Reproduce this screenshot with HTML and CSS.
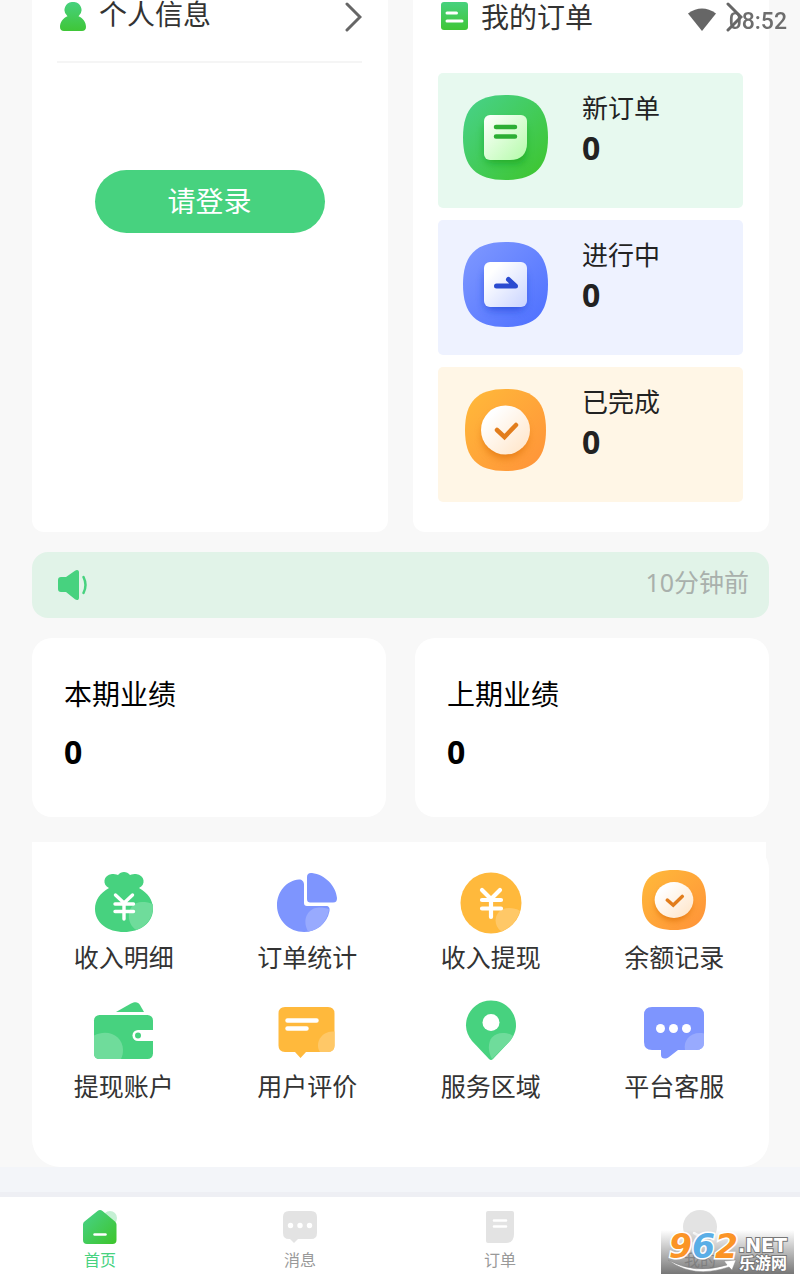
FILE: index.html
```
<!DOCTYPE html>
<html lang="zh-CN">
<head>
<meta charset="UTF-8">
<meta name="viewport" content="width=device-width, initial-scale=1.0">
<title>首页</title>
<link rel="stylesheet" href="styles.css">
</head>
<body>

<!-- shared gradients and shapes -->
<svg class="defs" width="0" height="0" aria-hidden="true">
  <defs>
    <linearGradient id="green" x1="0" y1="0" x2="1" y2="1"><stop offset="0" stop-color="#48d28c"/><stop offset="1" stop-color="#3dc52a"/></linearGradient>
    <linearGradient id="green-v" x1="0" y1="0" x2="0" y2="1"><stop offset="0" stop-color="#47d17e"/><stop offset="1" stop-color="#3fc637"/></linearGradient>
    <linearGradient id="blue" x1="0" y1="0" x2="1" y2="1"><stop offset="0" stop-color="#8099ff"/><stop offset="1" stop-color="#4c6fff"/></linearGradient>
    <linearGradient id="orange" x1="0" y1="0" x2="1" y2="1"><stop offset="0" stop-color="#ffba3a"/><stop offset="1" stop-color="#ff9239"/></linearGradient>
    <linearGradient id="paper-green" x1="0" y1="0" x2="1" y2="1"><stop offset="0" stop-color="#fff"/><stop offset="1" stop-color="#b4fba9"/></linearGradient>
    <linearGradient id="paper-blue" x1="0" y1="0" x2="1" y2="1"><stop offset="0.2" stop-color="#fff"/><stop offset="1" stop-color="#c9d4ff"/></linearGradient>
    <linearGradient id="paper-orange" x1="0" y1="0" x2="1" y2="1"><stop offset="0.2" stop-color="#fff"/><stop offset="1" stop-color="#ffe3c4"/></linearGradient>
    <filter id="blur" x="-50%" y="-50%" width="200%" height="200%"><feGaussianBlur stdDeviation="4"/></filter>
    <symbol id="done" viewBox="0 0 81 82" preserveAspectRatio="none">
      <path fill="url(#orange)" d="M40.500 0C69 0 81 13 81 41S69 82 40.500 82 0 69 0 41 12 0 40.500 0Z"/>
      <circle cx="40" cy="47" r="22" fill="#d96a00" opacity=".7" filter="url(#blur)"/>
      <circle cx="40.500" cy="41" r="24.500" fill="url(#paper-orange)"/>
      <path d="M32 41l7.500 7L51 36" fill="none" stroke="#e27d1c" stroke-width="4.500" stroke-linecap="round"/>
    </symbol>
  </defs>
</svg>

<div class="status-bar">
  <svg width="30" height="24" viewBox="0 0 30 24" aria-hidden="true"><path d="M1 5.500Q15-4.500 29 5.500L15 23Z" fill="#666"/></svg>
  <span class="clock">08:52</span>
</div>

<main class="content">
  <div class="cards">
    <section class="card card-user">
      <a href="#user" class="card-head">
        <svg class="head-icon" width="26" height="30" viewBox="0 0 26 30" aria-hidden="true">
          <path fill="url(#green-v)" d="M13 0a8 8 0 0 1 5.500 14.200c4.500 2 7.500 5.800 7.500 10.800 0 2.800-1.500 4-4 4H4c-2.500 0-4-1.200-4-4 0-5 3-8.800 7.500-10.800A8 8 0 0 1 13 0Z"/>
        </svg>
        <span class="card-title">个人信息</span>
        <svg class="arrow" width="18" height="30" viewBox="0 0 18 30" aria-hidden="true"><path d="M3 2l13 13L3 28" /></svg>
      </a>
      <button type="button" class="login-btn">请登录</button>
    </section>

    <section class="card card-orders">
      <a href="#orders" class="card-head">
        <svg class="head-icon" width="27" height="28" viewBox="0 0 27 28" aria-hidden="true">
          <rect width="27" height="28" rx="3" fill="url(#green-v)"/>
          <path d="M6 11h9.500M6 19h15" stroke="#fff" stroke-width="3" stroke-linecap="round"/>
        </svg>
        <span class="card-title">我的订单</span>
        <svg class="arrow" width="18" height="30" viewBox="0 0 18 30" aria-hidden="true"><path d="M3 2l13 13L3 28" /></svg>
      </a>
      <div class="orders">
        <a href="#new" class="order order-new">
          <svg width="85" height="85" viewBox="0 0 85 85" aria-hidden="true">
            <path fill="url(#green)" d="M42.500 0C72 0 85 13 85 42.500S72 85 42.500 85 0 72 0 42.500 13 0 42.500 0Z"/>
            <rect x="22" y="28" width="40" height="40" rx="8" fill="#089a18" opacity=".65" filter="url(#blur)"/>
            <path fill="url(#paper-green)" d="M27 20h31a6 6 0 0 1 6 6v22c0 11-6 17-17 17H27a6 6 0 0 1-6-6V26a6 6 0 0 1 6-6Z"/>
            <path d="M33 32h19M33 41.500h19" stroke="#2cae34" stroke-width="4.500" stroke-linecap="round"/>
          </svg>
          <span class="order-text"><span class="order-name">新订单</span><b class="order-num">0</b></span>
        </a>
        <a href="#doing" class="order order-doing">
          <svg width="85" height="85" viewBox="0 0 85 85" aria-hidden="true">
            <path fill="url(#blue)" d="M42.500 0C72 0 85 13 85 42.500S72 85 42.500 85 0 72 0 42.500 13 0 42.500 0Z"/>
            <rect x="22" y="28" width="40" height="40" rx="8" fill="#173bd0" opacity=".65" filter="url(#blur)"/>
            <rect x="21" y="20" width="43" height="45" rx="6" fill="url(#paper-blue)"/>
            <path d="M33.500 44H52.500L45.500 37.500" fill="none" stroke="#2a4bd0" stroke-width="5" stroke-linecap="round" stroke-linejoin="round"/>
          </svg>
          <span class="order-text"><span class="order-name">进行中</span><b class="order-num">0</b></span>
        </a>
        <a href="#done-list" class="order order-done">
          <svg width="85" height="85" viewBox="-2 0 85 85" aria-hidden="true"><use href="#done" width="81" height="82"/></svg>
          <span class="order-text"><span class="order-name">已完成</span><b class="order-num">0</b></span>
        </a>
      </div>
    </section>
  </div>

  <div class="notice">
    <svg width="30" height="30" viewBox="0 0 30 30" aria-hidden="true">
      <path fill="#47d27f" d="M3 7h5L17 .8c2-1.500 4-.8 4 1.500v25.400c0 2.300-2 3-4 1.500L8 22H3a3 3 0 0 1-3-3v-9a3 3 0 0 1 3-3Z"/>
      <path d="M25.500 7q4 8 0 16" fill="none" stroke="#47d27f" stroke-width="2.500" stroke-linecap="round"/>
    </svg>
    <span class="notice-time">10分钟前</span>
  </div>

  <div class="stats">
    <div class="stat"><div class="stat-name">本期业绩</div><b class="stat-num">0</b></div>
    <div class="stat"><div class="stat-name">上期业绩</div><b class="stat-num">0</b></div>
  </div>

  <div class="menu">
    <div class="menu-grid">
      <a href="#income" class="menu-item">
        <svg width="64" height="64" viewBox="0 0 64 64" aria-hidden="true">
          <path fill="#47d27f" d="M17 18c-7-3-6-13 3-14 2 0 4 0 6 1 3-4 9-4 12 0 2-1 4-1 6-1 9 1 10 11 3 14 9 5 14 12 14 21 0 14-13 23-29 23S3 53 3 39c0-9 5-16 14-21Z"/>
          <path fill="#6fdc9b" d="M61 34.500c.500 13-6 21.500-16.500 25.500C33 54 34 32 50 32c4 0 8 .5 11 2.500Z"/>
          <path d="M23.500 25L32 33l8.500-8M23 34h18.500M23 41.500h18.500M32 33v16" fill="none" stroke="#fff" stroke-width="3.400" stroke-linecap="round"/>
        </svg>
        <span>收入明细</span>
      </a>
      <a href="#stats" class="menu-item">
        <svg width="64" height="64" viewBox="0 0 64 64" aria-hidden="true">
          <path fill="#7e95fe" d="M29 14.500V33c0 2 1 3 3 3h19c3 0 4 2 3.500 5C52 54 41 62 29 62 14 62 2 50 2 35.500 2 21 12 10.500 24 9.500c3 0 5 2 5 5Z"/>
          <path fill="#7e95fe" d="M32 7c0-3 2-4.500 5-4 13 1.500 24 13 25 25 0 3-1 4.500-4 4.500H36c-3 0-4-1-4-4Z"/>
          <path fill="#98aafe" d="M33 61.500c-7-13 1-24 11-24 4 0 8 .5 10 2C52 52 44 60 33 61.500Z"/>
        </svg>
        <span>订单统计</span>
      </a>
      <a href="#withdraw" class="menu-item">
        <svg width="64" height="64" viewBox="0 0 64 64" aria-hidden="true">
          <circle cx="32" cy="33" r="30.500" fill="#ffb93c"/>
          <path fill="#ffc867" d="M42.500 61.500C32 54 36 38 50 38c4 0 8 .8 11 3-3 10-10 17-18.500 20.500Z"/>
          <path d="M23 20l9 9 9-9M23 30h19M23 38.500h19M32 29v18" fill="none" stroke="#fff" stroke-width="4.200" stroke-linecap="round"/>
        </svg>
        <span>收入提现</span>
      </a>
      <a href="#balance" class="menu-item">
        <svg width="64" height="64" viewBox="0 1 64 64" aria-hidden="true"><use href="#done" x="0" y="1" width="64" height="60"/></svg>
        <span>余额记录</span>
      </a>
      <a href="#account" class="menu-item">
        <svg width="64" height="64" viewBox="0 0 64 64" aria-hidden="true">
          <path fill="#47d27f" d="M24 13L39 4.500c4-2 7-2 9 1.500l4 7Z"/>
          <rect x="2" y="16" width="59" height="44" rx="5.500" fill="#47d27f"/>
          <path fill="#6fdc9b" d="M2 36.500C16 29 31 37 31 51c0 3-.5 6-2 9H7.500Q2 60 2 54.500Z"/>
          <path fill="#fff" d="M61 31H46a5.500 5.500 0 0 0 0 11h15Z"/>
          <circle cx="46" cy="36.500" r="3" fill="#47d27f"/>
        </svg>
        <span>提现账户</span>
      </a>
      <a href="#reviews" class="menu-item">
        <svg width="64" height="64" viewBox="0 0 64 64" aria-hidden="true">
          <path fill="#ffb93c" d="M10 8h43q6.500 0 6.500 6.500v32q0 6.500-6.500 6.500H31l-5.500 6L20 53h-10q-6.500 0-6.500-6.500v-32Q3.500 8 10 8Z"/>
          <path fill="#ffc867" d="M59.500 32.500v14q0 6.500-6.500 6.500h-8c-6-9 2-22 14.500-20.500Z"/>
          <path d="M12.500 21.500h29M12.500 29.500h19" stroke="#fff" stroke-width="4.500" stroke-linecap="round"/>
        </svg>
        <span>用户评价</span>
      </a>
      <a href="#area" class="menu-item">
        <svg width="64" height="64" viewBox="0 0 64 64" aria-hidden="true">
          <path fill="#47d27f" d="M32 1.500c14 0 25 11 25 25 0 6-2.500 11-6 15.500L34 60q-2 2-4 0L13 42c-3.500-4.500-6-9.500-6-15.500 0-14 11-25 25-25Z"/>
          <path fill="#6fdc9b" d="M54 37c-1 2-2 4-3.500 5.500L33 60C27 49 29 34 44 34c4 0 8 1 10 3Z"/>
          <circle cx="32" cy="23.500" r="8.500" fill="#fff"/>
        </svg>
        <span>服务区域</span>
      </a>
      <a href="#service" class="menu-item">
        <svg width="64" height="64" viewBox="0 0 64 64" aria-hidden="true">
          <path fill="#7e95fe" d="M10 8h44q8 0 8 8v27q0 8-8 8H36l-9 7c-4 3-8 1.500-8-2v-5h-9q-8 0-8-8V16q0-8 8-8Z"/>
          <path fill="#98aafe" d="M62 34.500V43q0 8-8 8H43c-2-10 6-19 19-16.500Z"/>
          <circle cx="18.500" cy="29.500" r="4.500" fill="#fff"/><circle cx="31.500" cy="29.500" r="4.500" fill="#fff"/><circle cx="44.500" cy="29.500" r="4.500" fill="#fff"/>
        </svg>
        <span>平台客服</span>
      </a>
    </div>
  </div>
</main>

<div class="strip"></div>

<nav class="tabbar">
  <a href="#home" class="tab active">
    <svg width="36" height="36" viewBox="0 0 36 36" aria-hidden="true">
      <circle cx="28" cy="9" r="7" fill="#c5f0d4"/>
      <path fill="url(#green)" d="M15.500 2q2.500-2 5 0l12.500 10.500q1.500 1.500 1.500 3V31q0 4-4 4H5q-4 0-4-4V15.500q0-2 1.500-3Z"/>
      <path d="M12.500 25.500h11" stroke="#fff" stroke-width="2.500" stroke-linecap="round"/>
    </svg>
    <span>首页</span>
  </a>
  <a href="#message" class="tab">
    <svg width="36" height="36" viewBox="0 0 36 36" aria-hidden="true">
      <path fill="#e3e3e3" d="M7 2h22q6 0 6 6v16q0 6-6 6H16l-4 4-4-4H7q-6 0-6-6V8q0-6 6-6Z"/>
      <circle cx="8.500" cy="16.500" r="2.700" fill="#fff"/><circle cx="18" cy="16.500" r="2.700" fill="#fff"/><circle cx="27.500" cy="16.500" r="2.700" fill="#fff"/>
    </svg>
    <span>消息</span>
  </a>
  <a href="#order" class="tab">
    <svg width="36" height="36" viewBox="0 0 36 36" aria-hidden="true">
      <path fill="#e3e3e3" d="M6 2h24q2 0 2 2v21q0 9-8 9H6q-2 0-2-2V4q0-2 2-2Z"/>
      <path d="M12 11.500h12M12 17.500h12" stroke="#fff" stroke-width="2.600" stroke-linecap="round"/>
    </svg>
    <span>订单</span>
  </a>
  <a href="#mine" class="tab">
    <svg width="36" height="36" viewBox="0 0 36 36" aria-hidden="true">
      <circle cx="18" cy="18" r="17" fill="#e3e3e3"/>
      <path d="M12 24q6 5 12 0" fill="none" stroke="#fff" stroke-width="2.500" stroke-linecap="round"/>
    </svg>
    <span>我的</span>
  </a>

  <svg class="site-mark" width="133" height="44" viewBox="0 0 133 44" role="img" aria-label="962.NET 乐游网">
    <defs>
      <linearGradient id="mark-bg" x1="0" y1="0" x2="0" y2="1"><stop offset="0" stop-color="#777" stop-opacity="0"/><stop offset="1" stop-color="#777"/></linearGradient>
    </defs>
    <rect width="133" height="44" fill="url(#mark-bg)"/>
    <path d="M7 30Q34 45 66 35l-3-4 12-1-4 10-3-3Q32 49 7 30Z" fill="#fff" stroke="#888" stroke-width=".5"/>
    <text class="mark-net" x="77" y="22">.NET</text>
    <text class="mark-cn" x="78" y="39">乐游网</text>
    <text class="mark-num" x="8" y="28"><tspan fill="#fb9426">9</tspan><tspan fill="#5aaee6">6</tspan><tspan fill="#fb9426">2</tspan></text>
  </svg>
</nav>

</body>
</html>
```
FILE: styles.css
```
* {
  box-sizing: border-box;
}

body {
  margin: 0;
  min-height: 100vh;
  display: flex;
  flex-direction: column;
  position: relative;
  background-color: #f8f8f8;
  color: #333;
  font-family: "Noto Sans", "Noto Sans CJK SC", sans-serif;
}

a {
  color: inherit;
  text-decoration: none;
}

svg {
  display: block;
  flex-shrink: 0;
}

.defs {
  position: absolute;
}

/* system status, lies over the page */
.status-bar {
  position: absolute;
  top: 8px;
  right: 13px;
  display: flex;
  gap: 12px;
  z-index: 2;
}

.clock {
  font-family: Roboto, sans-serif;
  font-weight: 500;
  font-size: 23px;
  line-height: 28px;
  color: #666;
  opacity: 0.95;
}

.content {
  padding: 0 31px 0 32px;
}

.cards {
  display: grid;
  grid-template-columns: 1fr 1fr;
  gap: 25px;
}

.card {
  background-color: #fff;
  border-radius: 0 0 12px 12px;
  padding: 0 26px 30px 25px;
}

.card-head {
  display: flex;
  align-items: flex-start;
  padding-top: 2px;
}

.card-title {
  flex: 1;
  margin-left: 13px;
  font-size: 28px;
  line-height: 30px;
}

.arrow {
  fill: none;
  stroke: #666;
  stroke-width: 3px;
  stroke-linecap: round;
}

.card-user .card-head {
  height: 63px;
  padding-left: 3px;
  border-bottom: 2px solid #f5f5f5;
}

.card-user .card-title {
  line-height: 24px;
}

.card-orders .card-head {
  height: 73px;
  padding-left: 3px;
}

.login-btn {
  display: block;
  width: 230px;
  max-width: 100%;
  height: 63px;
  margin: 107px auto 0;
  padding: 0 0 4px;
  border: none;
  border-radius: 32px;
  background-color: #47d27f;
  color: #fff;
  font-family: inherit;
  font-size: 28px;
  cursor: pointer;
}

.orders {
  display: flex;
  flex-direction: column;
  gap: 12px;
}

.order {
  display: flex;
  gap: 34px;
  min-height: 135px;
  padding: 22px 25px;
  border-radius: 5px;
  color: #222;
}

.order-new {
  background-color: #e7f9ef;
}

.order-doing {
  background-color: #eef2ff;
}

.order-done {
  background-color: #fff6e6;
}

.order-text {
  display: flex;
  flex-direction: column;
}

.order-name {
  font-size: 26px;
  line-height: 26px;
}

.order-num {
  font-size: 32px;
  line-height: 54px;
}

.notice {
  display: flex;
  justify-content: space-between;
  align-items: center;
  height: 66px;
  margin-top: 20px;
  padding: 0 20px 0 26px;
  border-radius: 16px;
  background-color: #e1f3e8;
}

.notice-time {
  font-size: 25px;
  line-height: 36px;
  padding-bottom: 6px;
  color: #a9b0ac;
}

.stats {
  display: grid;
  grid-template-columns: 1fr 1fr;
  gap: 29px;
  margin-top: 20px;
}

.stat {
  padding: 36px 32px 43px;
  border-radius: 20px;
  background-color: #fff;
  color: #000;
}

.stat-name {
  font-size: 28px;
  line-height: 40px;
}

.stat-num {
  display: block;
  margin-top: 16px;
  font-size: 32px;
  line-height: 44px;
}

.menu {
  margin-top: 25px;
  padding: 0 3px 53px 0;
  border-radius: 28px;
  background-color: #fff;
}

.menu-grid {
  display: grid;
  grid-template-columns: repeat(4, 1fr);
  gap: 14px 0;
  padding-top: 28px;
  background-color: #fff;
}

.menu-item {
  display: flex;
  flex-direction: column;
  align-items: center;
  padding-bottom: 5px;
  font-size: 25px;
  line-height: 46px;
}

.strip {
  height: 30px;
  background-color: #f3f5f9;
  border-bottom: 5px solid #eeeff4;
}

.tabbar {
  flex: 1;
  display: flex;
  position: relative;
  padding-top: 12px;
  background-color: #fff;
}

.tab {
  flex: 1;
  display: flex;
  flex-direction: column;
  align-items: center;
  gap: 4px;
  font-size: 16px;
  line-height: 22px;
  color: #999;
}

.tab.active {
  color: #47d27f;
}

/* site logo over the last tab */
.site-mark {
  position: absolute;
  right: 6px;
  bottom: 6px;
  overflow: visible;
}

.mark-num {
  font: italic bold 33px "DejaVu Sans", sans-serif;
  stroke: #fff;
  stroke-width: 3px;
  paint-order: stroke;
}

.mark-net {
  font: bold 19px "DejaVu Sans", sans-serif;
}

.mark-cn {
  font: bold 16px "Noto Sans CJK SC", sans-serif;
}

.mark-net,
.mark-cn {
  fill: #fff;
  stroke: #777;
  stroke-width: 2px;
  paint-order: stroke;
}
```
